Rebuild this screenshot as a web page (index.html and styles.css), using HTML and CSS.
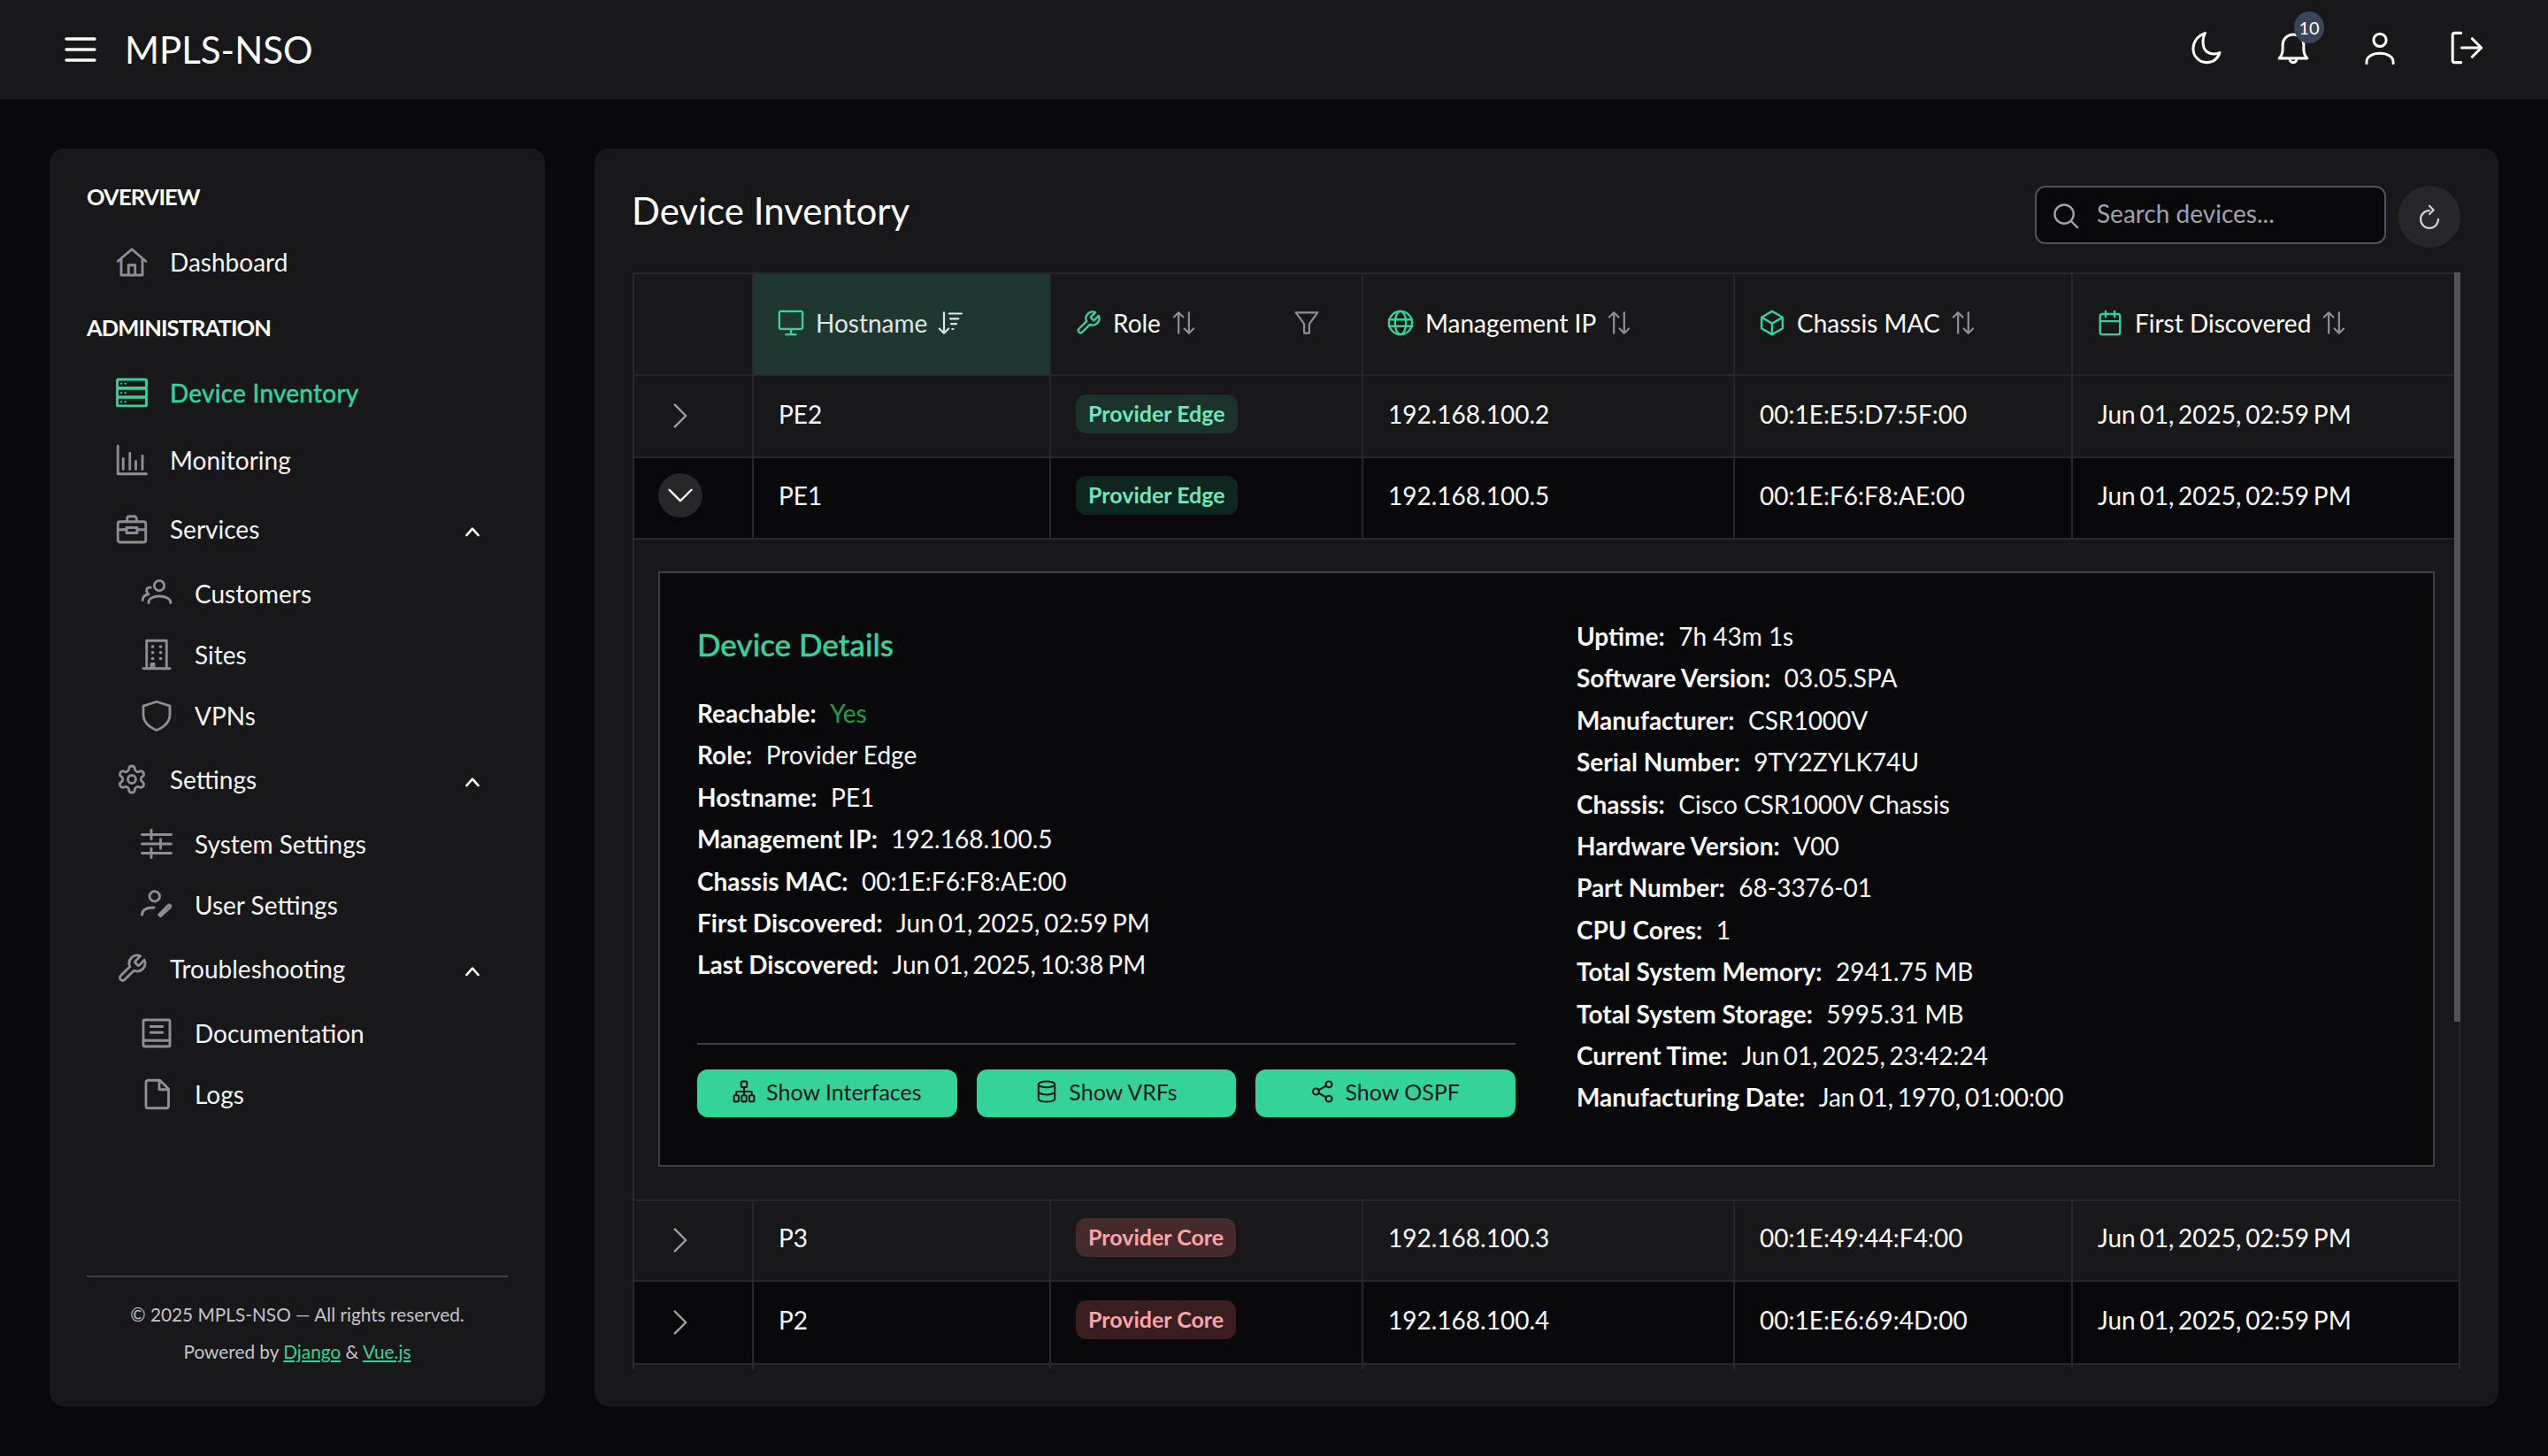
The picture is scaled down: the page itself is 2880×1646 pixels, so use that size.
FILE: index.html
```html
<!DOCTYPE html>
<html lang="en">
<head>
    <meta charset="UTF-8">
    <title>MPLS-NSO</title>
    <link rel="stylesheet" href="styles.css">
</head>
<body>

<svg class="sprite" width="0" height="0">
    <symbol id="i-bars" viewBox="0 0 36 36"><path d="M2 6h32M2 18h32M2 30h32"/></symbol>
    <symbol id="i-moon" viewBox="0 0 24 24"><path d="M11 1.500C7 3 3 6.500 2.500 12c-.4 5.500 4 10.500 9.500 10.500 4.500 0 8-2.500 9.500-7-5 2-10 .5-11.500-4-1-3.500-.5-7 1-10z"/></symbol>
    <symbol id="i-bell" viewBox="0 0 24 24"><path d="M2 19.500c1.500-1.500 2.500-3 2.500-6.500V10a7.500 7.500 0 0 1 15 0v3c0 3.500 1 5 2.500 6.500zM9.500 19.500c0 4 5 4 5 0"/></symbol>
    <symbol id="i-user" viewBox="0 0 24 24"><circle cx="12" cy="6.500" r="4.500"/><path d="M2.500 23v-1c0-3.500 4-6 9.500-6s9.500 2.500 9.500 6v1"/></symbol>
    <symbol id="i-signout" viewBox="0 0 24 24"><path d="M8 1.500H3.500a1.500 1.500 0 0 0-1.500 1.500v18a1.500 1.500 0 0 0 1.500 1.500H8M8.500 12H22.500M16 5.500l6.500 6.500-6.500 6.500"/></symbol>
    <symbol id="i-home" viewBox="0 0 24 24"><path d="M1.500 11.500 12 2.500l10.500 9M4 9.500V22h16V9.500M9.500 22v-7.500h5V22"/></symbol>
    <symbol id="i-server" viewBox="0 0 24 24"><rect x="1" y="2" width="22" height="6.300" rx=".8"/><rect x="1" y="8.800" width="22" height="6.300" rx=".8"/><rect x="1" y="15.600" width="22" height="6.300" rx=".8"/><path class="dots" d="M4 5.100h.2M7 5.100h.2M4 12h.2M7 12h.2M4 18.800h.2M7 18.800h.2"/></symbol>
    <symbol id="i-chart" viewBox="0 0 24 24"><path d="M1.500 1.500V22.500H23M5.500 11v8M10.500 7v12M15 13v6M20 9v10"/></symbol>
    <symbol id="i-briefcase" viewBox="0 0 24 24"><rect x="1.500" y="6.500" width="21" height="15.500" rx="1.500"/><path d="M8.500 6.500V4a1.500 1.500 0 0 1 1.500-1.500h4A1.500 1.500 0 0 1 15.500 4v2.500M1.500 12.500h6.500M16 12.500h6.500"/><rect x="8" y="11" width="8" height="4"/></symbol>
    <symbol id="i-users" viewBox="0 0 24 24"><circle cx="14" cy="6" r="3.800"/><path d="M6 19v-.5c0-2.500 3-4.500 8-4.500s8.500 2 8.500 4.500v.5M7.500 7.500C5 7 3.500 9 5 11.500M1.500 17c0-2.500 1.500-4 4.500-4.500"/></symbol>
    <symbol id="i-building" viewBox="0 0 24 24"><path d="M4.500 22.500V1.500h15v21M2 22.500h20M10 22.500v-3.500h-2v3.500"/><path class="dots thick" d="M9 6h.1M15 6h.1M9 10.500h.1M15 10.500h.1M9 15h.1M15 15h.1"/></symbol>
    <symbol id="i-shield" viewBox="0 0 24 24"><path d="M12 1.500 22 4.800V11c0 5.500-4 9.500-10 12C6 20.500 2 16.500 2 11V4.800z"/></symbol>
    <symbol id="i-cog" viewBox="0 0 24 24"><path d="M12.220 2h-.44a2 2 0 0 0-2 2v.18a2 2 0 0 1-1 1.730l-.43.25a2 2 0 0 1-2 0l-.15-.08a2 2 0 0 0-2.730.73l-.22.38a2 2 0 0 0 .73 2.730l.15.1a2 2 0 0 1 1 1.720v.51a2 2 0 0 1-1 1.740l-.15.09a2 2 0 0 0-.73 2.730l.22.38a2 2 0 0 0 2.730.73l.15-.08a2 2 0 0 1 2 0l.43.25a2 2 0 0 1 1 1.730V20a2 2 0 0 0 2 2h.44a2 2 0 0 0 2-2v-.18a2 2 0 0 1 1-1.730l.43-.25a2 2 0 0 1 2 0l.15.08a2 2 0 0 0 2.730-.73l.22-.39a2 2 0 0 0-.73-2.730l-.15-.08a2 2 0 0 1-1-1.740v-.5a2 2 0 0 1 1-1.740l.15-.09a2 2 0 0 0 .73-2.730l-.22-.38a2 2 0 0 0-2.730-.73l-.15.08a2 2 0 0 1-2 0l-.43-.25a2 2 0 0 1-1-1.730V4a2 2 0 0 0-2-2z"/><circle cx="12" cy="12" r="3"/></symbol>
    <symbol id="i-sliders" viewBox="0 0 24 24"><path d="M1 5h22M1 12h22M1 19h22M8 1.500V8.500M15 8.500v7M8 15.500v7"/></symbol>
    <symbol id="i-useredit" viewBox="0 0 24 24"><circle cx="10.500" cy="5.500" r="3.800"/><path d="M1 19.500c0-3 2.500-5.500 9-5.500"/><path d="M15 20.500l-1.200-1.200 7-7a1 1 0 0 1 1.500 0 1 1 0 0 1 0 1.500z"/></symbol>
    <symbol id="i-wrench" viewBox="0 0 24 24"><path d="M14.700 6.300a1 1 0 0 0 0 1.400l1.600 1.600a1 1 0 0 0 1.400 0l3.770-3.770a6 6 0 0 1-7.940 7.940l-6.910 6.910a2.120 2.120 0 0 1-3-3l6.910-6.910a6 6 0 0 1 7.940-7.940l-3.760 3.760z"/></symbol>
    <symbol id="i-book" viewBox="0 0 24 24"><rect x="2" y="2" width="20" height="20" rx="1.200"/><path d="M7.500 7h9M7.500 11.500h9M2 17.500h20"/></symbol>
    <symbol id="i-file" viewBox="0 0 24 24"><path d="M5 1.500h9.500L21 8v13a1.500 1.500 0 0 1-1.500 1.500h-14A1.500 1.500 0 0 1 4 21V3a1.500 1.500 0 0 1 1-1.500zM14 1.500V8.500h7"/></symbol>
    <symbol id="i-up" viewBox="0 0 24 24"><path d="M4 17 12 8l8 9"/></symbol>
    <symbol id="i-search" viewBox="0 0 24 24"><circle cx="10.500" cy="10.500" r="8.500"/><path d="M17 17l5.500 5.500"/></symbol>
    <symbol id="i-refresh" viewBox="0 0 24 24"><path d="M12 6a8.500 8.500 0 1 0 8.500 8.500M12 1.500 16 5.500 12 9.500" /></symbol>
    <symbol id="i-desktop" viewBox="0 0 24 24"><rect x="1.500" y="1.500" width="21" height="16" rx="1.500"/><path d="M12 17.500v4.500M7.500 22.500h9"/></symbol>
    <symbol id="i-sortdown" viewBox="0 0 24 24"><path d="M6 2v20M1.500 17.500 6 22l4.500-4.500M11 3h12M12 8h8M13 13h5M14 18h1"/></symbol>
    <symbol id="i-sort" viewBox="0 0 24 24"><path d="M7 22V2M2.500 6.500 7 2l4.500 4.500M17 2v20M12.500 17.500 17 22l4.500-4.500"/></symbol>
    <symbol id="i-filter" viewBox="0 0 24 24"><path d="M1.500 2h21L14.500 13v9h-5v-9z"/></symbol>
    <symbol id="i-globe" viewBox="0 0 24 24"><circle cx="12" cy="12" r="10.500"/><ellipse cx="12" cy="12" rx="5" ry="10.500"/><path d="M1.500 9h21M1.500 15h21"/></symbol>
    <symbol id="i-box" viewBox="0 0 24 24"><path d="M12 1.500 21.500 7v10L12 22.500 2.500 17V7zM2.500 7 12 12.500 21.500 7M12 12.500v10"/></symbol>
    <symbol id="i-calendar" viewBox="0 0 24 24"><rect x="3" y="4" width="18" height="18.500" rx="2"/><path d="M3 10.500h18M8 1.500v5M16 1.500v5"/></symbol>
    <symbol id="i-right" viewBox="0 0 24 24"><path d="M7 2l10 10-10 10"/></symbol>
    <symbol id="i-down" viewBox="0 0 24 24"><path d="M2 7l10 10 10-10"/></symbol>
    <symbol id="i-sitemap" viewBox="0 0 24 24"><rect x="9" y="1.500" width="6" height="6" rx="1"/><path d="M12 7.500V12M4 16v-4h16v4M12 12v4"/><rect x="1.500" y="16" width="5" height="6.500" rx="1"/><rect x="9.500" y="16" width="5" height="6.500" rx="1"/><rect x="17.500" y="16" width="5" height="6.500" rx="1"/></symbol>
    <symbol id="i-database" viewBox="0 0 24 24"><ellipse cx="12" cy="4.500" rx="8.500" ry="3.200"/><path d="M3.500 4.500v15c0 1.800 3.800 3.200 8.500 3.200s8.500-1.400 8.500-3.200v-15M3.500 12c0 1.800 3.800 3.200 8.500 3.200s8.500-1.400 8.500-3.200"/></symbol>
    <symbol id="i-share" viewBox="0 0 24 24"><circle cx="18.500" cy="4.500" r="3.200"/><circle cx="5" cy="12" r="3.200"/><circle cx="18.500" cy="19.500" r="3.200"/><path d="M8 10.300 15.700 6M8 13.700l7.700 4.300"/></symbol>
</svg>

<header class="topbar">
    <div class="topbar-left">
        <svg class="ic ic-bars"><use href="#i-bars"/></svg>
        <span class="brand">MPLS-NSO</span>
    </div>
    <div class="topbar-right">
        <svg class="ic ic-top"><use href="#i-moon"/></svg>
        <span class="bell">
            <svg class="ic ic-top"><use href="#i-bell"/></svg>
            <span class="bell-count">10</span>
        </span>
        <svg class="ic ic-top"><use href="#i-user"/></svg>
        <svg class="ic ic-top"><use href="#i-signout"/></svg>
    </div>
</header>

<div class="layout">
    <aside class="sidebar">
        <nav class="nav">
            <div class="nav-label">OVERVIEW</div>
            <a class="nav-item"><svg class="ic"><use href="#i-home"/></svg>Dashboard</a>

            <div class="nav-label">ADMINISTRATION</div>
            <a class="nav-item active"><svg class="ic"><use href="#i-server"/></svg>Device Inventory</a>
            <a class="nav-item"><svg class="ic"><use href="#i-chart"/></svg>Monitoring</a>
            <a class="nav-item nav-group"><svg class="ic"><use href="#i-briefcase"/></svg>Services<svg class="ic ic-up"><use href="#i-up"/></svg></a>
            <a class="nav-sub"><svg class="ic"><use href="#i-users"/></svg>Customers</a>
            <a class="nav-sub"><svg class="ic"><use href="#i-building"/></svg>Sites</a>
            <a class="nav-sub"><svg class="ic"><use href="#i-shield"/></svg>VPNs</a>
            <a class="nav-item"><svg class="ic"><use href="#i-cog"/></svg>Settings<svg class="ic ic-up"><use href="#i-up"/></svg></a>
            <a class="nav-sub"><svg class="ic"><use href="#i-sliders"/></svg>System Settings</a>
            <a class="nav-sub"><svg class="ic"><use href="#i-useredit"/></svg>User Settings</a>
            <a class="nav-item"><svg class="ic"><use href="#i-wrench"/></svg>Troubleshooting<svg class="ic ic-up"><use href="#i-up"/></svg></a>
            <a class="nav-sub"><svg class="ic"><use href="#i-book"/></svg>Documentation</a>
            <a class="nav-sub"><svg class="ic"><use href="#i-file"/></svg>Logs</a>
        </nav>
        <footer class="side-footer">
            <p>© 2025 MPLS-NSO — All rights reserved.</p>
            <p>Powered by <a>Django</a> &amp; <a>Vue.js</a></p>
        </footer>
    </aside>

    <main class="panel">
        <div class="panel-head">
            <h1>Device Inventory</h1>
            <div class="panel-tools">
                <label class="search">
                    <svg class="ic"><use href="#i-search"/></svg>
                    <span>Search devices...</span>
                </label>
                <button class="refresh"><svg class="ic"><use href="#i-refresh"/></svg></button>
            </div>
        </div>

        <div class="table-wrap">
            <table class="devices">
                <colgroup>
                    <col class="col-toggle"><col class="col-host"><col class="col-role">
                    <col class="col-ip"><col class="col-mac"><col class="col-date">
                </colgroup>
                <thead>
                    <tr>
                        <th></th>
                        <th class="sorted"><span class="th-in"><svg class="ic ic-col"><use href="#i-desktop"/></svg>Hostname<svg class="ic ic-sort"><use href="#i-sortdown"/></svg></span></th>
                        <th><span class="th-in"><svg class="ic ic-col"><use href="#i-wrench"/></svg>Role<svg class="ic ic-sort"><use href="#i-sort"/></svg><svg class="ic ic-filter"><use href="#i-filter"/></svg></span></th>
                        <th><span class="th-in"><svg class="ic ic-col"><use href="#i-globe"/></svg>Management IP<svg class="ic ic-sort"><use href="#i-sort"/></svg></span></th>
                        <th><span class="th-in"><svg class="ic ic-col"><use href="#i-box"/></svg>Chassis MAC<svg class="ic ic-sort"><use href="#i-sort"/></svg></span></th>
                        <th><span class="th-in"><svg class="ic ic-col"><use href="#i-calendar"/></svg>First Discovered<svg class="ic ic-sort"><use href="#i-sort"/></svg></span></th>
                    </tr>
                </thead>
                <tbody>
                    <tr class="row-a">
                        <td class="toggle"><svg class="ic ic-caret"><use href="#i-right"/></svg></td>
                        <td>PE2</td>
                        <td><span class="tag tag-edge">Provider Edge</span></td>
                        <td>192.168.100.2</td>
                        <td>00:1E:E5:D7:5F:00</td>
                        <td class="date">Jun 01, 2025, 02:59 PM</td>
                    </tr>
                    <tr class="row-b">
                        <td class="toggle"><span class="toggle-open"><svg class="ic ic-caret"><use href="#i-down"/></svg></span></td>
                        <td>PE1</td>
                        <td><span class="tag tag-edge">Provider Edge</span></td>
                        <td>192.168.100.5</td>
                        <td>00:1E:F6:F8:AE:00</td>
                        <td class="date">Jun 01, 2025, 02:59 PM</td>
                    </tr>
                    <tr class="row-detail">
                        <td colspan="6">
                            <div class="details">
                                <div class="details-left">
                                    <h3>Device Details</h3>
                                    <p><b>Reachable:</b><span class="yes">Yes</span></p>
                                    <p><b>Role:</b>Provider Edge</p>
                                    <p><b>Hostname:</b>PE1</p>
                                    <p><b>Management IP:</b>192.168.100.5</p>
                                    <p><b>Chassis MAC:</b>00:1E:F6:F8:AE:00</p>
                                    <p><b>First Discovered:</b><span class="date">Jun 01, 2025, 02:59 PM</span></p>
                                    <p><b>Last Discovered:</b><span class="date">Jun 01, 2025, 10:38 PM</span></p>
                                    <div class="details-actions">
                                        <button class="btn"><svg class="ic"><use href="#i-sitemap"/></svg>Show Interfaces</button>
                                        <button class="btn"><svg class="ic"><use href="#i-database"/></svg>Show VRFs</button>
                                        <button class="btn"><svg class="ic"><use href="#i-share"/></svg>Show OSPF</button>
                                    </div>
                                </div>
                                <div class="details-right">
                                    <p><b>Uptime:</b>7h 43m 1s</p>
                                    <p><b>Software Version:</b>03.05.SPA</p>
                                    <p><b>Manufacturer:</b>CSR1000V</p>
                                    <p><b>Serial Number:</b>9TY2ZYLK74U</p>
                                    <p><b>Chassis:</b>Cisco CSR1000V Chassis</p>
                                    <p><b>Hardware Version:</b>V00</p>
                                    <p><b>Part Number:</b>68-3376-01</p>
                                    <p><b>CPU Cores:</b>1</p>
                                    <p><b>Total System Memory:</b>2941.75 MB</p>
                                    <p><b>Total System Storage:</b>5995.31 MB</p>
                                    <p><b>Current Time:</b><span class="date">Jun 01, 2025, 23:42:24</span></p>
                                    <p><b>Manufacturing Date:</b><span class="date">Jan 01, 1970, 01:00:00</span></p>
                                </div>
                            </div>
                        </td>
                    </tr>
                    <tr class="row-a row-short">
                        <td class="toggle"><svg class="ic ic-caret"><use href="#i-right"/></svg></td>
                        <td>P3</td>
                        <td><span class="tag tag-core">Provider Core</span></td>
                        <td>192.168.100.3</td>
                        <td>00:1E:49:44:F4:00</td>
                        <td class="date">Jun 01, 2025, 02:59 PM</td>
                    </tr>
                    <tr class="row-b row-tall">
                        <td class="toggle"><svg class="ic ic-caret"><use href="#i-right"/></svg></td>
                        <td>P2</td>
                        <td><span class="tag tag-core">Provider Core</span></td>
                        <td>192.168.100.4</td>
                        <td>00:1E:E6:69:4D:00</td>
                        <td class="date">Jun 01, 2025, 02:59 PM</td>
                    </tr>
                    <tr class="row-a">
                        <td></td><td></td><td></td><td></td><td></td><td></td>
                    </tr>
                </tbody>
            </table>
            <div class="scroll-thumb"></div>
        </div>
    </main>
</div>

</body>
</html>
```

FILE: styles.css
```css
* {
    box-sizing: border-box;
}
body {
    margin: 0;
    height: 1646px;
    overflow: hidden;
    background-color: #09090b;
    color: #fafafa;
    font-family: Lato, "Open Sans", sans-serif;
    font-size: 28px;
}
p, h1, h3 {
    margin: 0;
}
.sprite {
    position: absolute;
}
.ic {
    width: 36px;
    height: 36px;
    flex: none;
    fill: none;
    stroke: currentColor;
    stroke-width: 1.9;
    stroke-linecap: round;
    stroke-linejoin: round;
}
symbol .dots {
    stroke-width: 1.3;
}
symbol .thick {
    stroke-width: 2.4;
}
.date {
    word-spacing: -2.4px;
}

/* top bar */
.topbar {
    height: 112px;
    padding: 0 73px;
    background-color: #18181b;
    display: flex;
    align-items: center;
    justify-content: space-between;
}
.topbar-left {
    display: flex;
    align-items: center;
    gap: 32px;
}
.ic-bars {
    stroke-width: 3.4;
    stroke-linecap: round;
}
.brand {
    font-size: 42px;
    color: #fff;
}
.topbar-right {
    display: flex;
    align-items: center;
    gap: 60px;
    margin-top: -4px;
    margin-right: 0;
    color: #fff;
}
.ic-top {
    display: block;
    width: 38px;
    height: 38px;
    stroke-width: 1.9;
}
.bell {
    position: relative;
}
.bell-count {
    position: absolute;
    top: -22px;
    left: 20px;
    width: 34px;
    height: 36px;
    border-radius: 50%;
    background-color: #3b4559;
    font-size: 20px;
    line-height: 36px;
    text-align: center;
}

/* page columns */
.layout {
    display: flex;
    gap: 56px;
    padding: 56px;
    height: 1534px;
}

/* sidebar */
.sidebar {
    width: 560px;
    flex: none;
    padding: 18px 42px 0;
    background-color: #18181b;
    border-radius: 16px;
    display: flex;
    flex-direction: column;
}
.nav-label {
    height: 72px;
    line-height: 72px;
    font-size: 25.5px;
    font-weight: 700;
    letter-spacing: -0.9px;
    color: #fff;
}
.nav-item, .nav-sub {
    display: flex;
    align-items: center;
    color: #f4f4f5;
}
.nav-item {
    height: 76px;
    padding-left: 33px;
    gap: 25px;
}
.nav-group {
    margin-top: 2px;
}
.nav-sub {
    height: 69px;
    padding-left: 61px;
    gap: 25px;
}
.nav-item > .ic, .nav-sub > .ic {
    color: #8e8e96;
}
.nav-item.active, .nav-item.active > .ic {
    color: #34d399;
}
.nav-item.active {
    -webkit-text-stroke: 0.5px #34d399;
    letter-spacing: 0.25px;
}
.nav-item > .ic-up {
    width: 20px;
    height: 20px;
    margin-left: auto;
    margin-right: 30px;
    margin-top: 6px;
    color: #fff;
    stroke-width: 3;
}
.side-footer {
    margin-top: auto;
    height: 148px;
    padding-top: 21px;
    border-top: 2px solid #3f3f46;
    font-size: 20.8px;
    line-height: 42px;
    text-align: center;
    color: #c4c4c8;
}
.side-footer a {
    color: #34d399;
    text-decoration: underline;
}

/* main panel */
.panel {
    flex: 1;
    min-width: 0;
    padding: 42px 43px;
    background-color: #18181b;
    border-radius: 16px;
    display: flex;
    flex-direction: column;
}
.panel-head {
    display: flex;
    align-items: center;
    justify-content: space-between;
    height: 70px;
    margin-bottom: 28px;
}
.panel-head h1 {
    font-size: 42px;
    font-weight: 400;
    color: #fff;
    margin-top: -15px;
    margin-left: -1px;
}
.panel-tools {
    display: flex;
    gap: 14px;
}
.search {
    width: 397px;
    height: 66px;
    padding: 0 18px 4px;
    display: flex;
    align-items: center;
    gap: 20px;
    background-color: #09090b;
    border: 2px solid #52525b;
    border-radius: 12px;
    color: #a1a1aa;
}
.search .ic {
    width: 30px;
    height: 30px;
    margin-top: 6px;
}
.refresh {
    width: 70px;
    height: 70px;
    padding: 0;
    border: none;
    border-radius: 50%;
    background-color: #27272a;
    color: #d4d4d8;
    display: flex;
    align-items: center;
    justify-content: center;
}
.refresh .ic {
    width: 28px;
    height: 28px;
}

/* table */
.table-wrap {
    position: relative;
    height: 1240px;
    overflow: hidden;
}
.scroll-thumb {
    position: absolute;
    top: 0;
    right: 0;
    width: 7px;
    height: 847px;
    background-color: #52525b;
}
.devices {
    width: 100%;
    table-layout: fixed;
    border-collapse: collapse;
}
.col-toggle { width: 135px; }
.col-host { width: 336px; }
.col-role { width: 353px; }
.col-ip { width: 420px; }
.col-mac { width: 382px; }
.devices th, .devices td {
    border: 2px solid #27272a;
    padding: 0 0 6px 28px;
    text-align: left;
    font-weight: 400;
}
.devices thead th {
    height: 115px;
    padding: 0 0 3px 27px;
    color: #fff;
}
.devices th.sorted {
    background-color: #1e3831;
    color: #e4e4e7;
}
.th-in {
    display: flex;
    align-items: center;
    gap: 12px;
}
.ic-col {
    width: 30px;
    height: 30px;
    margin-right: 1px;
    color: #34d399;
}
.ic-sort {
    width: 28px;
    height: 28px;
    color: #8e8e96;
    margin-left: 0;
}
.sorted .ic-sort {
    color: #e4e4e7;
}
.ic-filter {
    width: 28px;
    height: 28px;
    color: #8e8e96;
    margin-left: auto;
    margin-right: 48px;
}
.row-a {
    height: 93px;
    background-color: #18181b;
}
.row-b {
    height: 92px;
    background-color: #09090b;
}
.row-short {
    height: 91px;
}
.row-tall {
    height: 94px;
}
.devices td.toggle {
    padding: 0 30px 6px 0;
    text-align: center;
}
.ic-caret {
    width: 30px;
    height: 30px;
    color: #a1a1aa;
    vertical-align: middle;
}
.toggle-open {
    width: 50px;
    height: 50px;
    border-radius: 50%;
    background-color: #27272a;
    display: inline-flex;
    align-items: center;
    justify-content: center;
    vertical-align: middle;
}
.toggle-open .ic-caret {
    color: #fff;
}
.tag {
    display: inline-block;
    height: 44px;
    padding: 0 14px;
    border-radius: 12px;
    font-size: 25px;
    font-weight: 700;
    line-height: 42px;
}
.tag-edge {
    background-color: rgba(52, 211, 153, 0.15);
    color: #6ee7b7;
}
.tag-core {
    background-color: rgba(248, 113, 113, 0.2);
    color: #fca5a5;
}

/* expanded row */
.devices .row-detail td {
    padding: 36px 27px 37px 27px;
    background-color: #18181b;
}
.details {
    display: grid;
    grid-template-columns: 925px 1fr;
    column-gap: 69px;
    padding: 48px 43px 52px 42px;
    background-color: #09090b;
    border: 2px solid #3f3f46;
}
.details p {
    height: 47.4px;
    line-height: 47.4px;
    white-space: nowrap;
}
.details b {
    margin-right: 15.5px;
    font-weight: 700;
}
.details-left {
    display: flex;
    flex-direction: column;
}
.details-left h3 {
    height: 87px;
    padding-top: 11px;
    font-size: 35px;
    font-weight: 500;
    color: #34d399;
    -webkit-text-stroke: 0.4px #34d399;
}
.yes {
    color: #16a34a;
}
.details-actions {
    margin-top: auto;
    margin-bottom: 2px;
    padding-top: 28px;
    border-top: 2px solid #3f3f46;
    display: grid;
    grid-template-columns: repeat(3, 1fr);
    gap: 22px;
}
.btn {
    height: 54px;
    padding: 0 0 3px;
    border: none;
    border-radius: 12px;
    background-color: #34d399;
    color: #18181b;
    font-family: inherit;
    font-size: 25px;
    display: flex;
    align-items: center;
    justify-content: center;
    gap: 12px;
}
.btn .ic {
    width: 26px;
    height: 26px;
}
```
